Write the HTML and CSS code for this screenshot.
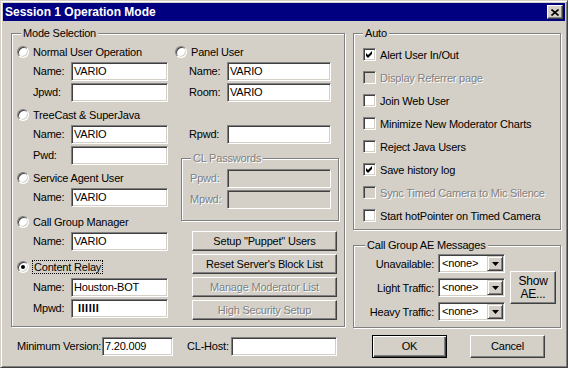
FILE: index.html
```html
<!DOCTYPE html>
<html>
<head>
<meta charset="utf-8">
<link rel="stylesheet" href="styles.css">
</head>
<body>
<div class="dialog">
  <div class="titlebar">
    <span class="title">Session 1 Operation Mode</span>
    <span class="close"><svg width="8" height="7" viewBox="0 0 8 7"><path d="M0.5 0.5 L7.5 6.5 M7.5 0.5 L0.5 6.5" stroke="#000" stroke-width="1.6" fill="none"/></svg></span>
  </div>
  <div class="content">
    <div class="main">
      <div class="group mode">
        <span class="legend">Mode Selection</span>
        <div class="cols">
          <div class="col col1">
            <div class="row rrow r1"><span class="radio"></span><span>Normal User Operation</span></div>
            <div class="row frow"><span class="lbl">Name:</span><span class="input w97">VARIO</span></div>
            <div class="row frow"><span class="lbl">Jpwd:</span><span class="input w97"></span></div>
            <div class="row rrow"><span class="radio"></span><span>TreeCast &amp; SuperJava</span></div>
            <div class="row frow"><span class="lbl">Name:</span><span class="input w97">VARIO</span></div>
            <div class="row frow"><span class="lbl">Pwd:</span><span class="input w97"></span></div>
            <div class="row rrow"><span class="radio"></span><span>Service Agent User</span></div>
            <div class="row frow"><span class="lbl">Name:</span><span class="input w97">VARIO</span></div>
            <div class="row rrow r4"><span class="radio"></span><span>Call Group Manager</span></div>
            <div class="row frow"><span class="lbl">Name:</span><span class="input w97">VARIO</span></div>
            <div class="row rrow r5"><span class="radio checked"></span><span class="focus">Content Relay</span></div>
            <div class="row frow"><span class="lbl">Name:</span><span class="input w97">Houston-BOT</span></div>
            <div class="row frow"><span class="lbl">Mpwd:</span><span class="input w97"><b class="pw">IIIIII</b></span></div>
          </div>
          <div class="col col2">
            <div class="row rrow r1"><span class="radio"></span><span>Panel User</span></div>
            <div class="row frow"><span class="lbl">Name:</span><span class="input w104">VARIO</span></div>
            <div class="row frow"><span class="lbl">Room:</span><span class="input w104">VARIO</span></div>
            <div class="row spacer"></div>
            <div class="row frow"><span class="lbl">Rpwd:</span><span class="input w104"></span></div>
            <div class="group clp">
              <span class="legend dis">CL Passwords</span>
              <div class="row frow"><span class="lbl dis">Ppwd:</span><span class="input w104 disabled"></span></div>
              <div class="row frow"><span class="lbl dis">Mpwd:</span><span class="input w104 disabled"></span></div>
            </div>
            <div class="btns">
              <span class="btn">Setup "Puppet" Users</span>
              <span class="btn">Reset Server's Block List</span>
              <span class="btn dis">Manage Moderator List</span>
              <span class="btn dis">High Security Setup</span>
            </div>
          </div>
        </div>
      </div>
      <div class="rightcol">
        <div class="group auto">
          <span class="legend">Auto</span>
          <div class="crow"><span class="check"><svg width="7" height="7" viewBox="0 0 7 7"><polygon points="0,2 2,4 6,0 6,3 2,7 0,5" fill="#000"/></svg></span><span>Alert User In/Out</span></div>
          <div class="crow"><span class="check disabled"></span><span class="dis">Display Referrer page</span></div>
          <div class="crow"><span class="check"></span><span>Join Web User</span></div>
          <div class="crow"><span class="check"></span><span>Minimize New Moderator Charts</span></div>
          <div class="crow"><span class="check"></span><span>Reject Java Users</span></div>
          <div class="crow"><span class="check"><svg width="7" height="7" viewBox="0 0 7 7"><polygon points="0,2 2,4 6,0 6,3 2,7 0,5" fill="#000"/></svg></span><span>Save history log</span></div>
          <div class="crow"><span class="check disabled"></span><span class="dis">Sync Timed Camera to Mic Silence</span></div>
          <div class="crow"><span class="check"></span><span>Start hotPointer on Timed Camera</span></div>
        </div>
        <div class="group ae">
          <span class="legend">Call Group AE Messages</span>
          <div class="ae-body">
            <div class="ae-rows">
              <div class="arow"><span class="albl">Unavailable:</span><span class="combo"><span class="cval">&lt;none&gt;</span><span class="cbtn"><svg width="7" height="4" viewBox="0 0 7 4"><polygon points="0,0 7,0 3.5,4" fill="#000"/></svg></span></span></div>
              <div class="arow"><span class="albl">Light Traffic:</span><span class="combo"><span class="cval">&lt;none&gt;</span><span class="cbtn"><svg width="7" height="4" viewBox="0 0 7 4"><polygon points="0,0 7,0 3.5,4" fill="#000"/></svg></span></span></div>
              <div class="arow"><span class="albl">Heavy Traffic:</span><span class="combo"><span class="cval">&lt;none&gt;</span><span class="cbtn"><svg width="7" height="4" viewBox="0 0 7 4"><polygon points="0,0 7,0 3.5,4" fill="#000"/></svg></span></span></div>
            </div>
            <span class="btn show">Show<br>AE...</span>
          </div>
        </div>
      </div>
    </div>
    <div class="footer">
      <span class="flbl1">Minimum Version:</span><span class="input w71">7.20.009</span>
      <span class="flbl2">CL-Host:</span><span class="input w106"></span>
      <span class="btn default ok">OK</span>
      <span class="btn cancel">Cancel</span>
    </div>
  </div>
</div>
</body>
</html>
```

FILE: styles.css
```css
* { box-sizing: border-box; }
body {
  margin: 0;
  background: #fff;
  font-family: "Liberation Sans", Arial, sans-serif;
  font-size: 11px;
  letter-spacing: -0.2px;
  color: #000;
}
.dialog {
  width: 568px;
  height: 368px;
  background: #d4d0c8;
  border: 1px solid;
  border-color: #d4d0c8 #404040 #404040 #d4d0c8;
  box-shadow: inset 1px 1px 0 #fff, inset -1px -1px 0 #808080;
  padding: 2px;
}
.titlebar {
  height: 18px;
  background: #000080;
  display: flex;
  align-items: center;
  justify-content: space-between;
  padding: 0 2px;
}
.title { color: #fff; font-weight: bold; font-size: 12px; letter-spacing: 0; }
.close {
  width: 16px;
  height: 14px;
  background: #d4d0c8;
  border: 1px solid;
  border-color: #fff #404040 #404040 #fff;
  box-shadow: inset -1px -1px 0 #808080;
  display: flex;
  align-items: center;
  justify-content: center;
}
.content { padding: 12px 0 0 8px; }
.main { display: flex; gap: 8px; height: 295px; }
.group {
  position: relative;
  border: 1px solid #808080;
  box-shadow: inset 1px 1px 0 #fff, 1px 1px 0 #fff;
}
.legend {
  position: absolute;
  top: -7px;
  left: 9px;
  padding: 0 2px;
  background: #d4d0c8;
  line-height: 13px;
  white-space: nowrap;
}
.dis { color: #808080; text-shadow: 1px 1px 0 #fff; }
.mode { width: 334px; height: 294px; padding: 8px 0 0 5px; }
.cols { display: grid; grid-template-columns: 158px 1fr; }
.col { display: flex; flex-direction: column; }
.row { display: flex; align-items: center; height: 21px; white-space: nowrap; }
.rrow { gap: 4px; }
.r1 { height: 20px; }
.r4 { margin-top: 2px; }
.r5 { margin-top: 2px; height: 23px; }
.frow { padding-left: 16px; align-items: flex-start; }
.lbl { width: 38px; line-height: 19px; }
.col2 .frow { padding-left: 14px; }
.input {
  height: 19px;
  background: #fff;
  border: 1px solid;
  border-color: #808080 #fff #fff #808080;
  box-shadow: inset 1px 1px 0 #404040, inset -1px -1px 0 #d4d0c8;
  padding: 0 2px;
  line-height: 17px;
  white-space: nowrap;
  overflow: hidden;
}
.input.disabled { background: #d4d0c8; }
.w97 { width: 97px; }
.w104 { width: 104px; }
.w71 { width: 71px; }
.w106 { width: 106px; }
.pw { font-weight: bold; padding-left: 4px; letter-spacing: 0.5px; }
.radio {
  width: 12px;
  height: 12px;
  flex: none;
  border-radius: 50%;
  background: #fff;
  border: 1px solid;
  border-color: #808080 #fff #fff #808080;
  box-shadow: inset 1px 1px 0 #404040, inset -1px -1px 0 #d4d0c8;
  display: flex;
  align-items: center;
  justify-content: center;
}
.radio.checked::after {
  content: "";
  width: 4px;
  height: 4px;
  border-radius: 50%;
  background: #000;
}
.focus { outline: 1px dotted #000; outline-offset: 0; padding: 0 1px; }
.spacer { height: 21px; }
.clp { width: 158px; height: 63px; margin: 12px 0 0 6px; padding: 10px 0 0 8px; }
.clp .frow { padding-left: 0; }
.clp .lbl { width: 37px; }
.btns { display: flex; flex-direction: column; gap: 3px; margin: 10px 0 0 17px; }
.btn {
  height: 20px;
  background: #d4d0c8;
  border: 1px solid;
  border-color: #fff #404040 #404040 #fff;
  box-shadow: inset -1px -1px 0 #808080;
  display: flex;
  align-items: center;
  justify-content: center;
  white-space: nowrap;
  text-align: center;
}
.btns .btn { width: 145px; }
.rightcol { display: flex; flex-direction: column; }
.auto { width: 208px; height: 197px; padding: 9px 0 0 9px; }
.crow { display: flex; align-items: center; gap: 4px; height: 23px; white-space: nowrap; }
.check {
  width: 13px;
  height: 13px;
  flex: none;
  background: #fff;
  border: 1px solid;
  border-color: #808080 #fff #fff #808080;
  box-shadow: inset 1px 1px 0 #404040, inset -1px -1px 0 #d4d0c8;
  display: flex;
  align-items: center;
  justify-content: center;
}
.check.disabled { background: #d4d0c8; }
.ae { width: 208px; height: 83px; margin-top: 15px; }
.ae .legend { left: 11px; }
.ae-body { display: flex; align-items: center; padding-top: 8px; }
.ae-rows { display: flex; flex-direction: column; gap: 5px; }
.arow { display: flex; align-items: center; gap: 4px; height: 19px; }
.albl { width: 80px; text-align: right; white-space: nowrap; }
.combo {
  width: 67px;
  height: 19px;
  background: #fff;
  border: 1px solid;
  border-color: #808080 #fff #fff #808080;
  box-shadow: inset 1px 1px 0 #404040, inset -1px -1px 0 #d4d0c8;
  display: flex;
  padding: 1px;
}
.cval { flex: 1; padding-left: 2px; line-height: 15px; }
.cbtn {
  width: 16px;
  height: 15px;
  background: #d4d0c8;
  border: 1px solid;
  border-color: #d4d0c8 #404040 #404040 #d4d0c8;
  box-shadow: inset 1px 1px 0 #fff, inset -1px -1px 0 #808080;
  display: flex;
  align-items: center;
  justify-content: center;
}
.show { width: 46px; height: 33px; margin-left: 5px; line-height: 13px; font-size: 12px; }
.footer { display: flex; align-items: center; height: 24px; margin-top: 6px; white-space: nowrap; }
.flbl1 { width: 85px; margin-left: 6px; }
.flbl2 { width: 44px; margin-left: 14px; }
.ok { width: 75px; height: 23px; margin-left: 35px; }
.btn.default {
  border: 1px solid #000;
  box-shadow: inset 1px 1px 0 #fff, inset -1px -1px 0 #404040, inset -2px -2px 0 #808080;
}
.cancel { width: 75px; height: 23px; margin-left: 23px; }
```
